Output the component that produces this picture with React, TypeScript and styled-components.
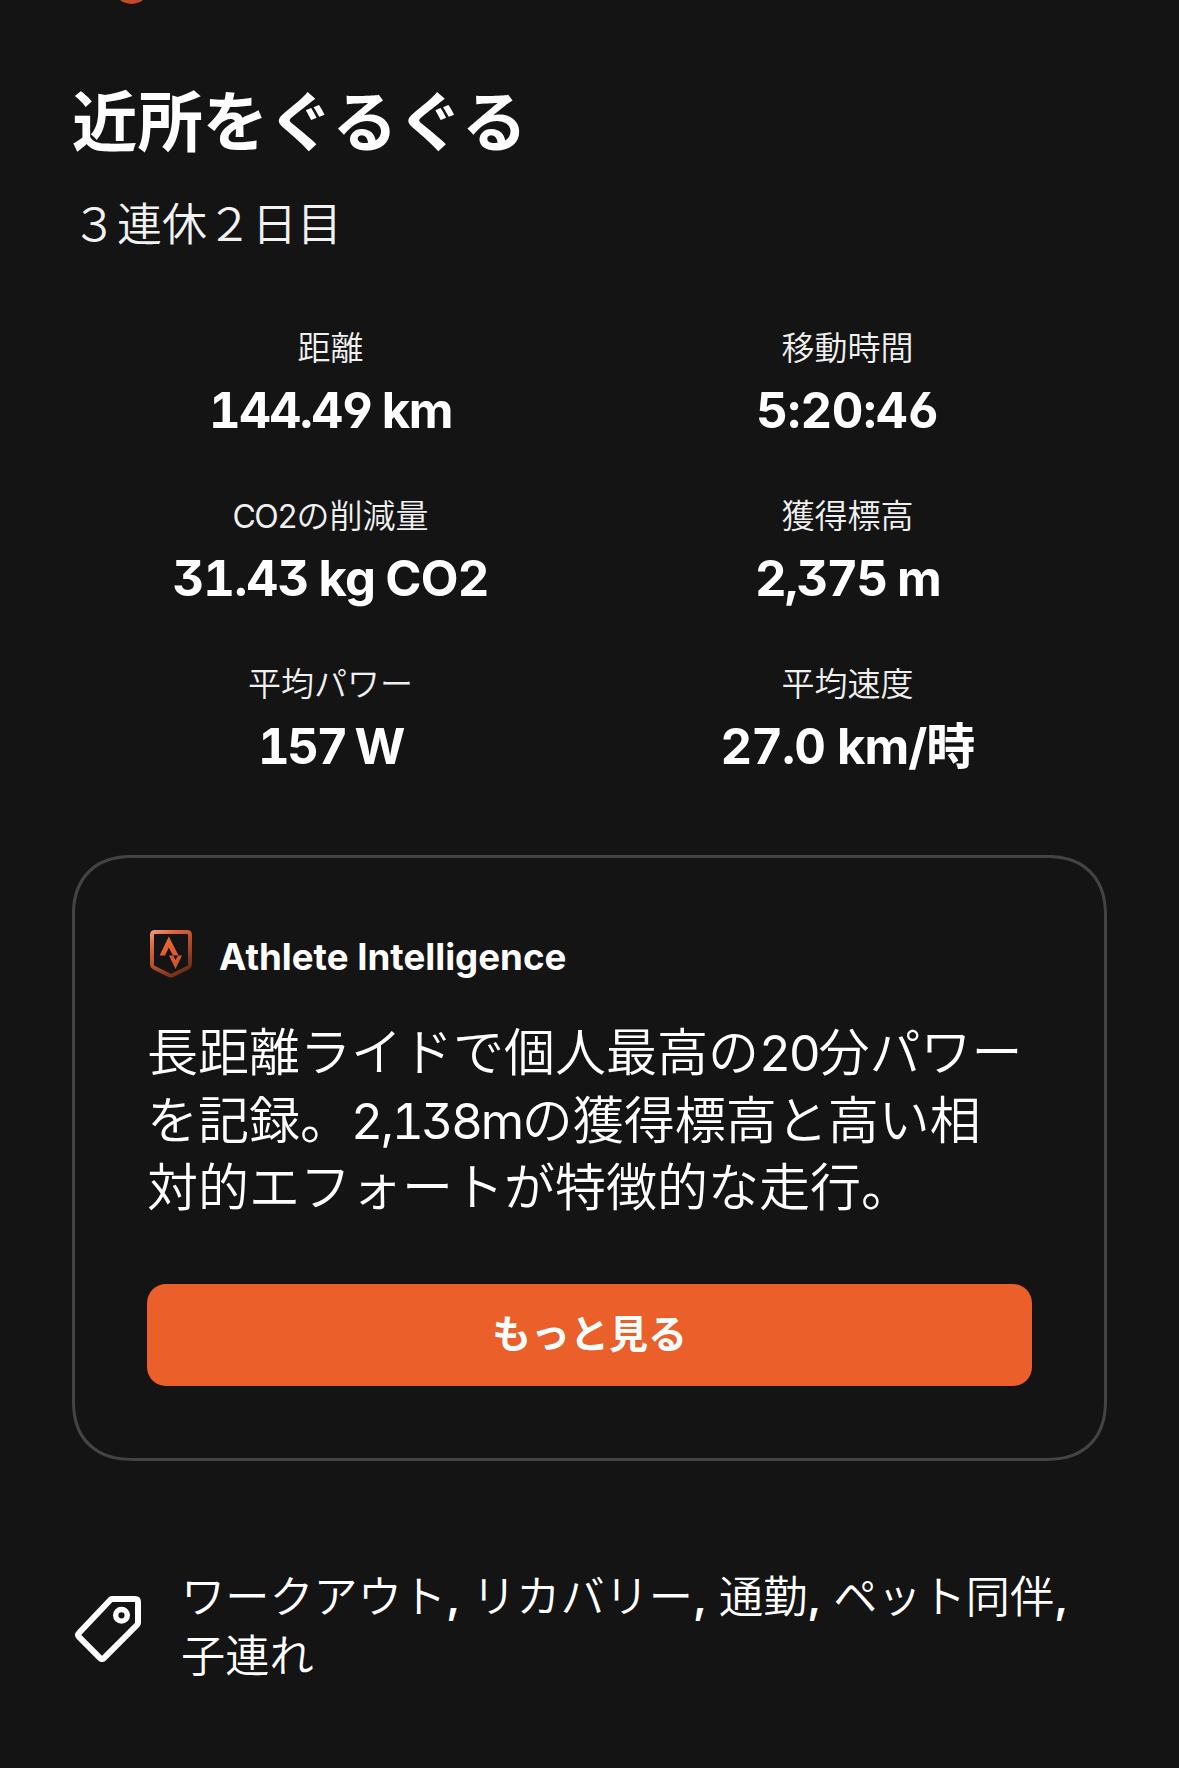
import React from "react";
import styled, { createGlobalStyle } from "styled-components";

const GlobalStyle = createGlobalStyle`
  *, *::before, *::after { box-sizing: border-box; }
  html, body { margin: 0; background: #141414; }
  body {
    font-family: "Noto Sans CJK JP", "Noto Sans", sans-serif;
    color: #fff;
    -webkit-font-smoothing: antialiased;
  }
`;

const Screen = styled.main`
  display: flex;
  flex-direction: column;
  width: 1179px;
  height: 1768px;
  padding: 0 72px;
  overflow: hidden;
  background: #141414;
`;

const PreviousEdge = styled.div`
  height: 79px;
  padding-left: 41px;
  overflow: hidden;
`;

const Marker = styled.div`
  width: 37px;
  height: 37px;
  margin-top: -33px;
  border-radius: 50%;
  background: #c44a27;
`;

const Title = styled.h1`
  margin: 0;
  font-size: 65.4px;
  line-height: 78px;
  font-weight: 700;
  white-space: nowrap;
`;

const Subtitle = styled.p`
  margin: 35px 0 0;
  font-size: 45px;
  line-height: 60px;
  font-weight: 350;
  color: #f2f2f2;
`;

const Stats = styled.section`
  display: grid;
  grid-template-columns: 517px 517px;
  row-gap: 55px;
  margin-top: 72px;
`;

const Stat = styled.div`
  display: flex;
  flex-direction: column;
  align-items: center;
  gap: 12px;
`;

const StatLabel = styled.span`
  height: 44px;
  font-size: 33px;
  line-height: 44px;
  font-weight: 350;
  color: #f0f0f0;
`;

const StatValue = styled.span<{ $tracking: number; $space: number }>`
  height: 57px;
  font-family: Inter, "Noto Sans CJK JP", sans-serif;
  font-feature-settings: "tnum", "cv09", "cv03", "cv04";
  font-size: 49px;
  line-height: 62px;
  font-weight: 700;
  letter-spacing: ${(p) => p.$tracking}px;
  word-spacing: ${(p) => p.$space}px;
  white-space: nowrap;
`;

const Latin = styled.span`
  font-family: Inter, sans-serif;
  font-feature-settings: "tnum", "cv09";
  font-size: 0.97em;
  font-weight: 400;
  line-height: 0;
  letter-spacing: -0.048em;
`;

const Card = styled.section`
  display: flex;
  flex-direction: column;
  height: 606px;
  margin-top: 82px;
  padding: 72px;
  border: 3px solid #434341;
  border-radius: 52px;
  @supports (corner-shape: superellipse(1.2)) {
    border-radius: 60px;
    corner-shape: superellipse(1.2);
  }
`;

const CardHeader = styled.header`
  display: flex;
  align-items: center;
  gap: 27px;
  height: 48px;
  padding-left: 3px;
`;

const CardTitle = styled.h2`
  margin: 6px 0 0;
  font-family: Inter, "Noto Sans CJK JP", sans-serif;
  font-size: 36.7px;
  line-height: 44px;
  font-weight: 700;
  white-space: nowrap;
`;

const Summary = styled.div`
  margin-top: 38px;
  font-size: 51px;
  font-weight: 350;
  white-space: nowrap;
`;

const SummaryLine = styled.div<{ $height: number }>`
  height: ${(p) => p.$height}px;
  line-height: 67px;
`;

const MoreButton = styled.button`
  display: flex;
  flex: none;
  align-items: center;
  justify-content: center;
  height: 102px;
  margin-top: auto;
  padding: 0 0 8px;
  border: 0;
  border-radius: 19px;
  background: #eb5f2a;
  color: #fff;
  font-family: inherit;
  font-size: 39px;
  line-height: 56px;
  font-weight: 700;
`;

const TagRow = styled.footer`
  display: flex;
  align-items: center;
  gap: 37px;
  margin-top: 104px;

  svg {
    flex: none;
    margin-top: 10px;
  }
`;

const TagList = styled.div`
  font-size: 44.2px;
  line-height: 59px;
  font-weight: 350;
  white-space: nowrap;
`;

const Comma = styled.span`
  font-family: Inter, sans-serif;
  font-weight: 600;
  line-height: 0;
  letter-spacing: 0.8px;
`;

const Shield = () => (
  <svg width="42" height="48" viewBox="0 0 42 48" fill="none">
    <defs>
      <linearGradient id="rim" x1="0" y1="0" x2="34" y2="48" gradientUnits="userSpaceOnUse">
        <stop offset="0" stopColor="#f0a083" />
        <stop offset="0.28" stopColor="#dc6238" />
        <stop offset="0.6" stopColor="#a9492a" />
        <stop offset="1" stopColor="#5a2414" />
      </linearGradient>
      <linearGradient id="bolt" x1="14" y1="8" x2="28" y2="38" gradientUnits="userSpaceOnUse">
        <stop offset="0" stopColor="#f0672f" />
        <stop offset="1" stopColor="#c9532d" />
      </linearGradient>
    </defs>
    <path
      d="M5 2H37Q40 2 40 5V34.5Q40 36.5 38.2 37.5L22.6 45.3Q21 46.1 19.4 45.3L3.8 37.5Q2 36.5 2 34.5V5Q2 2 5 2Z"
      stroke="url(#rim)"
      strokeWidth="4"
    />
    <path d="M18.8 6.5L28.6 25.5H23L18.8 17.6L15 25.5H9.6Z" fill="url(#bolt)" />
    <path d="M19 25.5H23.2L25.5 30L28 25.5H32L25.5 39Z" fill="url(#bolt)" />
  </svg>
);

const TagIcon = () => (
  <svg width="72" height="66" viewBox="0 0 72 66" fill="none">
    <path
      d="M40 3H63Q66 3 66 6V26.5Q66 28 65 29L32.2 61.8Q30 64 27.8 61.8L7.2 41.2Q5 39 7.2 36.8L38 4.2Q39 3 40 3Z"
      stroke="#fff"
      strokeWidth="6"
      strokeLinejoin="round"
    />
    <circle cx="49.5" cy="19.3" r="5.8" stroke="#fff" strokeWidth="5.4" />
  </svg>
);

const withLatin = (text: string) =>
  text
    .split(/([A-Za-z0-9,]+)/)
    .filter(Boolean)
    .map((part, i) => (/^[A-Za-z0-9,]+$/.test(part) ? <Latin key={i}>{part}</Latin> : part));

const stats = [
  { label: "距離", value: "144.49 km", tracking: -1.4, space: -2 },
  { label: "移動時間", value: "5:20:46", tracking: -0.3, space: 0 },
  { label: "CO2の削減量", value: "31.43 kg CO2", tracking: -0.8, space: -2.2 },
  { label: "獲得標高", value: "2,375 m", tracking: -1.7, space: -1 },
  { label: "平均パワー", value: "157 W", tracking: -2.4, space: -2 },
  { label: "平均速度", value: "27.0 km/時", tracking: -0.9, space: -0.5 },
];

const summary = [
  { text: "長距離ライドで個人最高の20分パワー", height: 68 },
  { text: "を記録。2,138mの獲得標高と高い相", height: 67 },
  { text: "対的エフォートが特徴的な走行。", height: 68 },
];

const tagLines = [["ワークアウト", "リカバリー", "通勤", "ペット同伴"], ["子連れ"]];

export default function App() {
  return (
    <>
      <GlobalStyle />
      <Screen lang="ja">
        <PreviousEdge>
          <Marker />
        </PreviousEdge>
        <Title>近所をぐるぐる</Title>
        <Subtitle>３連休２日目</Subtitle>
        <Stats>
          {stats.map((s) => (
            <Stat key={s.label}>
              <StatLabel>{withLatin(s.label)}</StatLabel>
              <StatValue $tracking={s.tracking} $space={s.space}>
                {s.value}
              </StatValue>
            </Stat>
          ))}
        </Stats>
        <Card>
          <CardHeader>
            <Shield />
            <CardTitle>Athlete Intelligence</CardTitle>
          </CardHeader>
          <Summary>
            {summary.map((l) => (
              <SummaryLine key={l.text} $height={l.height}>
                {withLatin(l.text)}
              </SummaryLine>
            ))}
          </Summary>
          <MoreButton>もっと見る</MoreButton>
        </Card>
        <TagRow>
          <TagIcon />
          <TagList>
            {tagLines.map((line, i) => (
              <div key={i}>
                {line.map((tag) => (
                  <React.Fragment key={tag}>
                    {tag}
                    {i === 0 && <Comma>, </Comma>}
                  </React.Fragment>
                ))}
              </div>
            ))}
          </TagList>
        </TagRow>
      </Screen>
    </>
  );
}
